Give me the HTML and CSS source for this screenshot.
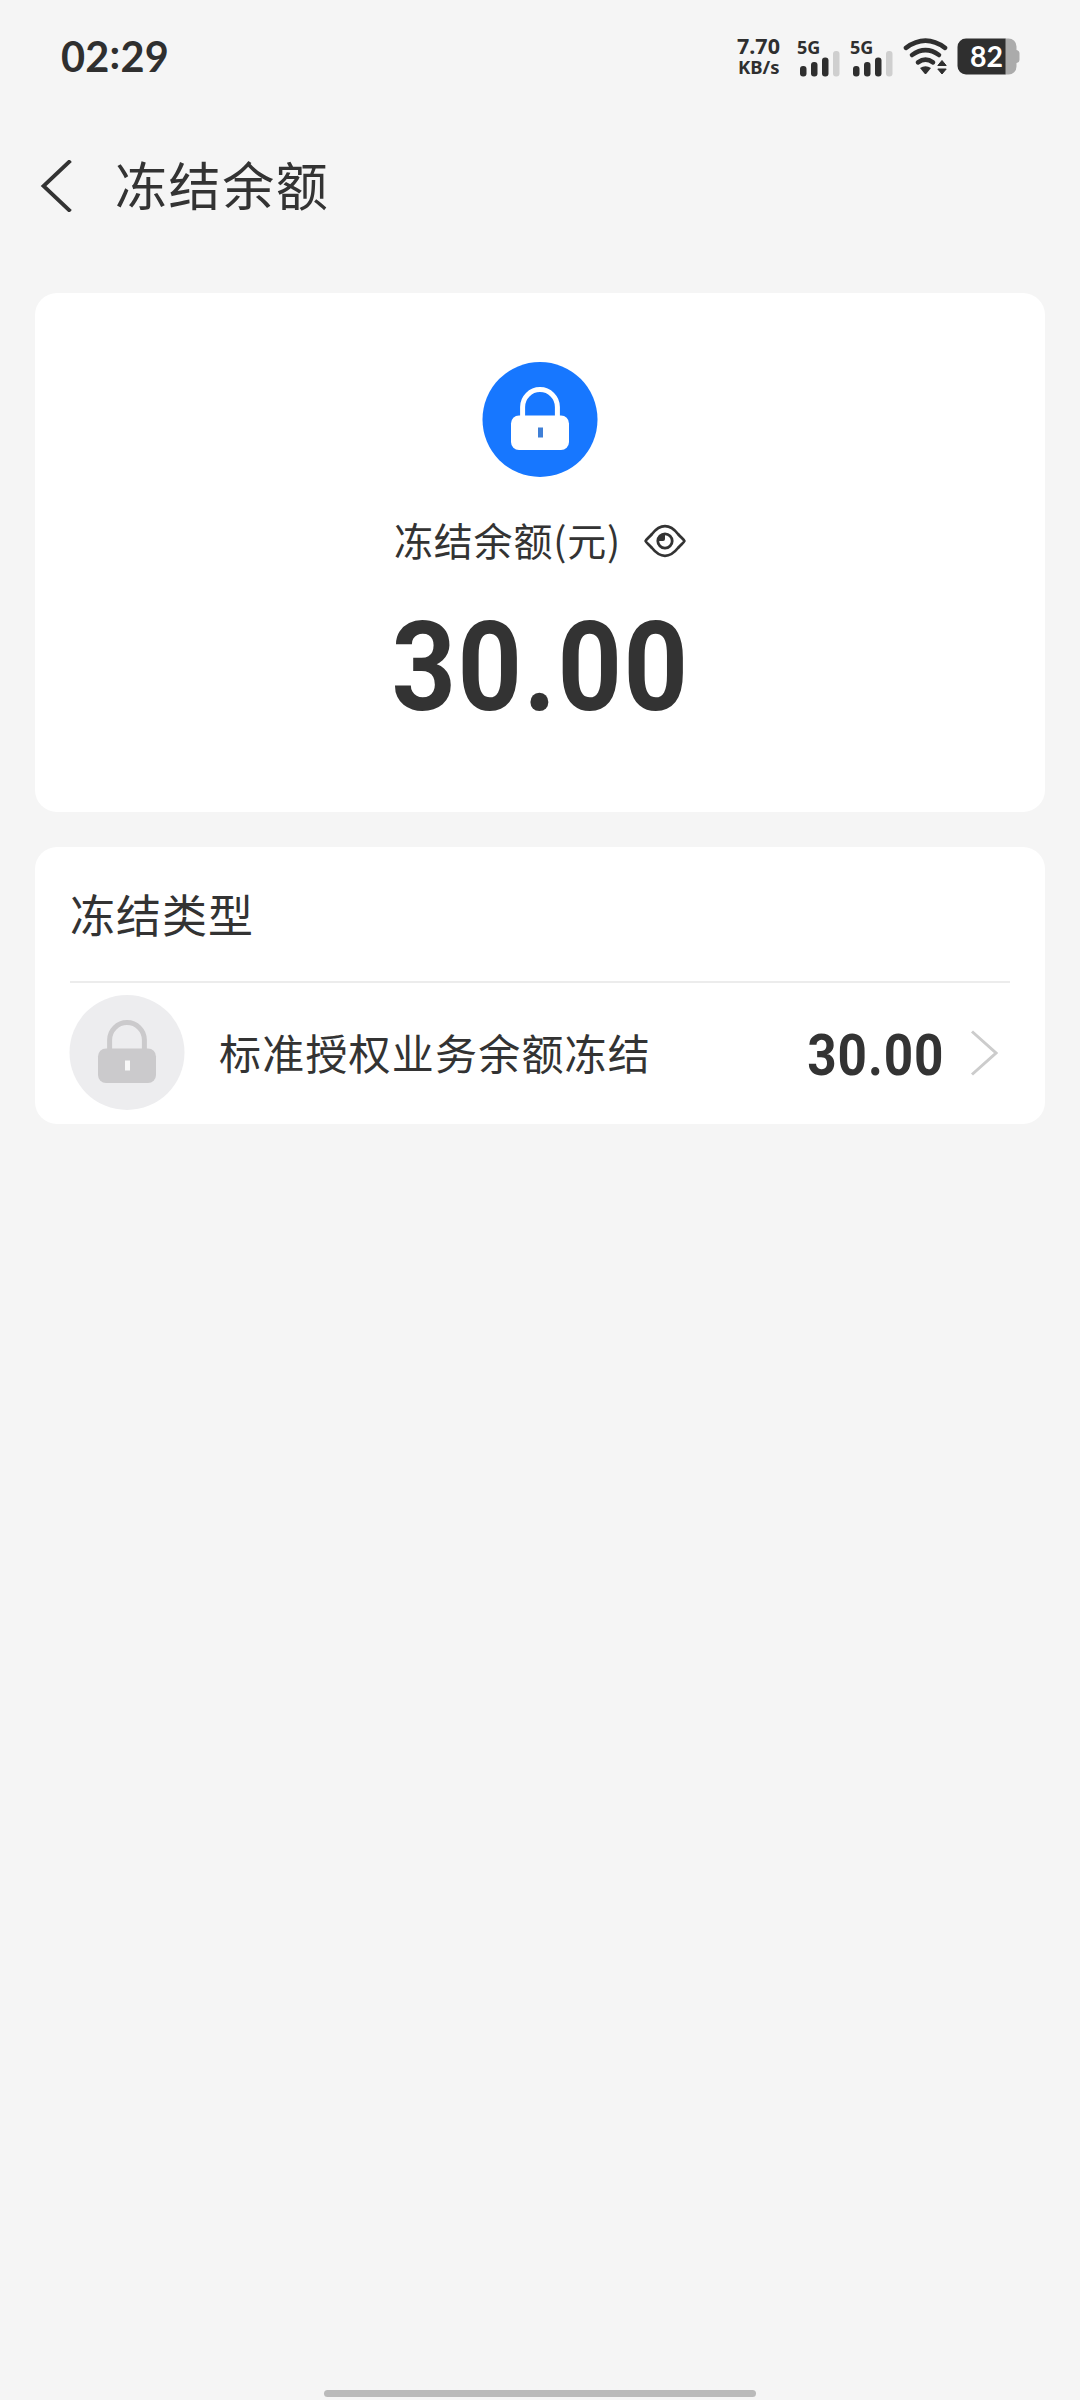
FILE: index.html
```html
<!DOCTYPE html>
<html lang="zh-CN">
<head>
<meta charset="utf-8">
<title>冻结余额</title>
<link rel="stylesheet" href="styles.css">
</head>
<body>
<svg class="defs" width="0" height="0" aria-hidden="true">
  <symbol id="lock" viewBox="0 0 116 116">
    <circle class="lock-disc" cx="58" cy="57.500" r="57.500"/>
    <path class="lock-shackle" d="M40.600 57V45a17.400 17.400 0 0 1 34.800 0V57"/>
    <rect class="lock-body" x="29" y="53.500" width="58" height="34.500" rx="8"/>
    <rect class="lock-hole" x="56" y="65.500" width="5" height="10"/>
  </symbol>
  <symbol id="signal" viewBox="0 0 41 26">
    <g fill="#2f2f2f">
      <rect x="0" y="15" width="6.500" height="10.500" rx="3"/>
      <rect x="11" y="11" width="6.500" height="14.500" rx="3"/>
      <rect x="22" y="6.500" width="6.500" height="19" rx="3"/>
    </g>
    <rect x="33" y="0" width="6.500" height="25.500" rx="3" fill="#cfcfcf"/>
  </symbol>
</svg>
<div class="screen">
  <header class="status">
    <div class="time">02<span class="colon">:</span>29</div>
    <div class="indicators">
      <div class="speed"><span class="rate">7.70</span><span class="unit">KB/s</span></div>
      <div class="cell"><span class="net">5G</span><svg class="bars" width="41" height="26"><use href="#signal"/></svg></div>
      <div class="cell"><span class="net">5G</span><svg class="bars" width="41" height="26"><use href="#signal"/></svg></div>
      <svg class="wifi" width="46" height="38" viewBox="0 0 46 38">
        <g fill="none" stroke="#2f2f2f" stroke-width="4.600" stroke-linecap="round">
          <path d="M3 9.800Q22.500-4.500 42 9.800"/>
          <path d="M9 17Q22.500 7.200 36 17"/>
          <path d="M15 24.300Q22.500 18.800 30 24.300"/>
        </g>
        <path fill="#2f2f2f" d="M17 30q5.500-3.500 11 0l-4.500 5.500q-1 1-2 0z"/>
        <path fill="#2f2f2f" d="M34.800 27.500 39 22.500l4.200 5zM34.800 31h8.400L39 36z" stroke="#2f2f2f" stroke-width="1" stroke-linejoin="round"/>
      </svg>
      <div class="battery">
        <svg width="64" height="37" viewBox="0 0 64 37">
          <path fill="#ababab" d="M48 .5h3.500a8 8 0 0 1 8 8v3.500q3 .5 3 3.500v6q0 3-3 3.500v3.500a8 8 0 0 1-8 8H48z"/>
          <path fill="#2f2f2f" d="M9 .5h39.500v36H9a8.500 8.500 0 0 1-8.500-8.500V9A8.500 8.500 0 0 1 9 .5z"/>
        </svg>
        <span class="level">82</span>
      </div>
    </div>
  </header>
  <nav class="nav">
    <svg class="back" width="34" height="52" viewBox="0 0 34 52"><path d="M31.500 .5 4.500 26 31.500 51.500" fill="none" stroke="#333" stroke-width="3.800"/></svg>
    <h1 class="title">冻结余额</h1>
  </nav>
  <main class="content">
    <section class="card summary">
      <svg class="lock" width="116" height="116"><use href="#lock"/></svg>
      <div class="label">
        <span>冻结余额(元)</span>
        <svg class="eye" width="42" height="34" viewBox="0 0 42 34">
          <g fill="none" stroke="#333" stroke-width="2.800" stroke-linejoin="round">
            <path d="M1.600 17C2 15.500 5 13.500 8 10 12 5 16 2.200 21 2.200S30 5 34 10c3 3.500 6 5.500 6.400 7-.4 1.500-3.400 3.500-6.400 7-4 5-8 7.800-13 7.800S12 29 8 24C5 20.500 2 18.500 1.600 17z"/>
            <circle cx="21" cy="17" r="7.200"/>
          </g>
          <path fill="#333" d="M21 10.500V15q0 2-2 2h-4.500a6.500 6.500 0 0 1 6.500-6.500z"/>
        </svg>
      </div>
      <div class="amount">30.00</div>
    </section>
    <section class="card types">
      <h2 class="heading">冻结类型</h2>
      <div class="row">
        <svg class="lock muted" width="116" height="116"><use href="#lock"/></svg>
        <span class="name">标准授权业务余额冻结</span>
        <span class="value">30.00</span>
        <svg class="chevron" width="28" height="46" viewBox="0 0 28 46"><path d="M2 1.500 26 23 2 44.500" fill="none" stroke="#ccc" stroke-width="3"/></svg>
      </div>
    </section>
  </main>
  <div class="home-bar"></div>
</div>
</body>
</html>
```
FILE: styles.css
```css
* { box-sizing: border-box; margin: 0; padding: 0; }
body {
  background: #f5f5f5;
  color: #333;
  font-family: "Noto Sans CJK SC", sans-serif;
}
svg { display: block; flex: none; }
.defs { position: absolute; }
.screen { width: 1080px; height: 2400px; display: flex; flex-direction: column; }

.status { height: 114px; padding: 0 59px 0 61px; display: flex; justify-content: space-between; color: #2f2f2f; }
.time { font: 700 41.500px/112px Lato, sans-serif; letter-spacing: 0.2px; }
.colon { position: relative; top: -3px; }
.indicators { display: flex; align-items: flex-start; padding-top: 37px; }
.speed { width: 60px; display: flex; flex-direction: column; }
.rate { font: 700 21.500px/19px "Noto Sans", sans-serif; margin-top: -1px; }
.unit { font: 700 18.500px/24px "Noto Sans", sans-serif; padding-left: 1px; }
.cell { width: 53px; height: 40px; position: relative; }
.net { position: absolute; left: 0; top: 1px; font: 700 18px/18px "Noto Sans", sans-serif; }
.bars { margin: 14px 0 0 3px; }
.wifi { margin: 1px 8px 0 0; }
.battery { position: relative; width: 64px; margin-top: 1px; }
.level { position: absolute; left: 13px; top: 0; font: 700 28.500px/37px Lato, sans-serif; color: #fff; }

.nav { height: 143px; padding-left: 39px; display: flex; align-items: center; }
.title { font-size: 52px; font-weight: 400; line-height: 72px; letter-spacing: 1.6px; margin: -4px 0 0 42px; }

.content { flex: 1; padding: 36px 35px 0; display: flex; flex-direction: column; gap: 35px; }
.card { background: #fff; border-radius: 22px; }
.summary { height: 519px; padding-top: 68px; display: flex; flex-direction: column; align-items: center; }
.lock { --disc: #1777ff; --glyph: #fff; --hole: #3f7fd6; margin-top: 1px; }
.lock.muted { --disc: #ededef; --glyph: #cbcacc; --hole: #f8f8f8; margin: 0 0 0 -1px; }
.lock-disc { fill: var(--disc); }
.lock-shackle { fill: none; stroke: var(--glyph); stroke-width: 5px; }
.lock-body { fill: var(--glyph); }
.lock-hole { fill: var(--hole); }
.label { display: flex; align-items: center; gap: 23px; margin-top: 38px; font-size: 39px; line-height: 54px; letter-spacing: 0.8px; }
.label span { margin-top: -4px; }
.amount { font: 700 125px/146px Roboto, sans-serif; letter-spacing: 1.6px; transform: scaleX(0.9); margin: 29px 0 0 1px; }

.types { height: 277px; padding: 0 35px; }
.heading { height: 136px; border-bottom: 2px solid #ececec; font-size: 45px; font-weight: 400; line-height: 133px; letter-spacing: 1px; }
.row { height: 140px; display: flex; align-items: center; padding-right: 12px; }
.name { flex: 1; margin: -3px 0 0 34px; font-size: 42px; letter-spacing: 1.2px; }
.value { font: 700 57px/66px Roboto, sans-serif; letter-spacing: 1px; transform: scaleX(0.9); transform-origin: right; margin-top: 5px; }
.chevron { margin-left: 26px; }

.home-bar { width: 432px; height: 7px; margin: 0 auto 3px; border-radius: 4px; background: #bababa; }
```
